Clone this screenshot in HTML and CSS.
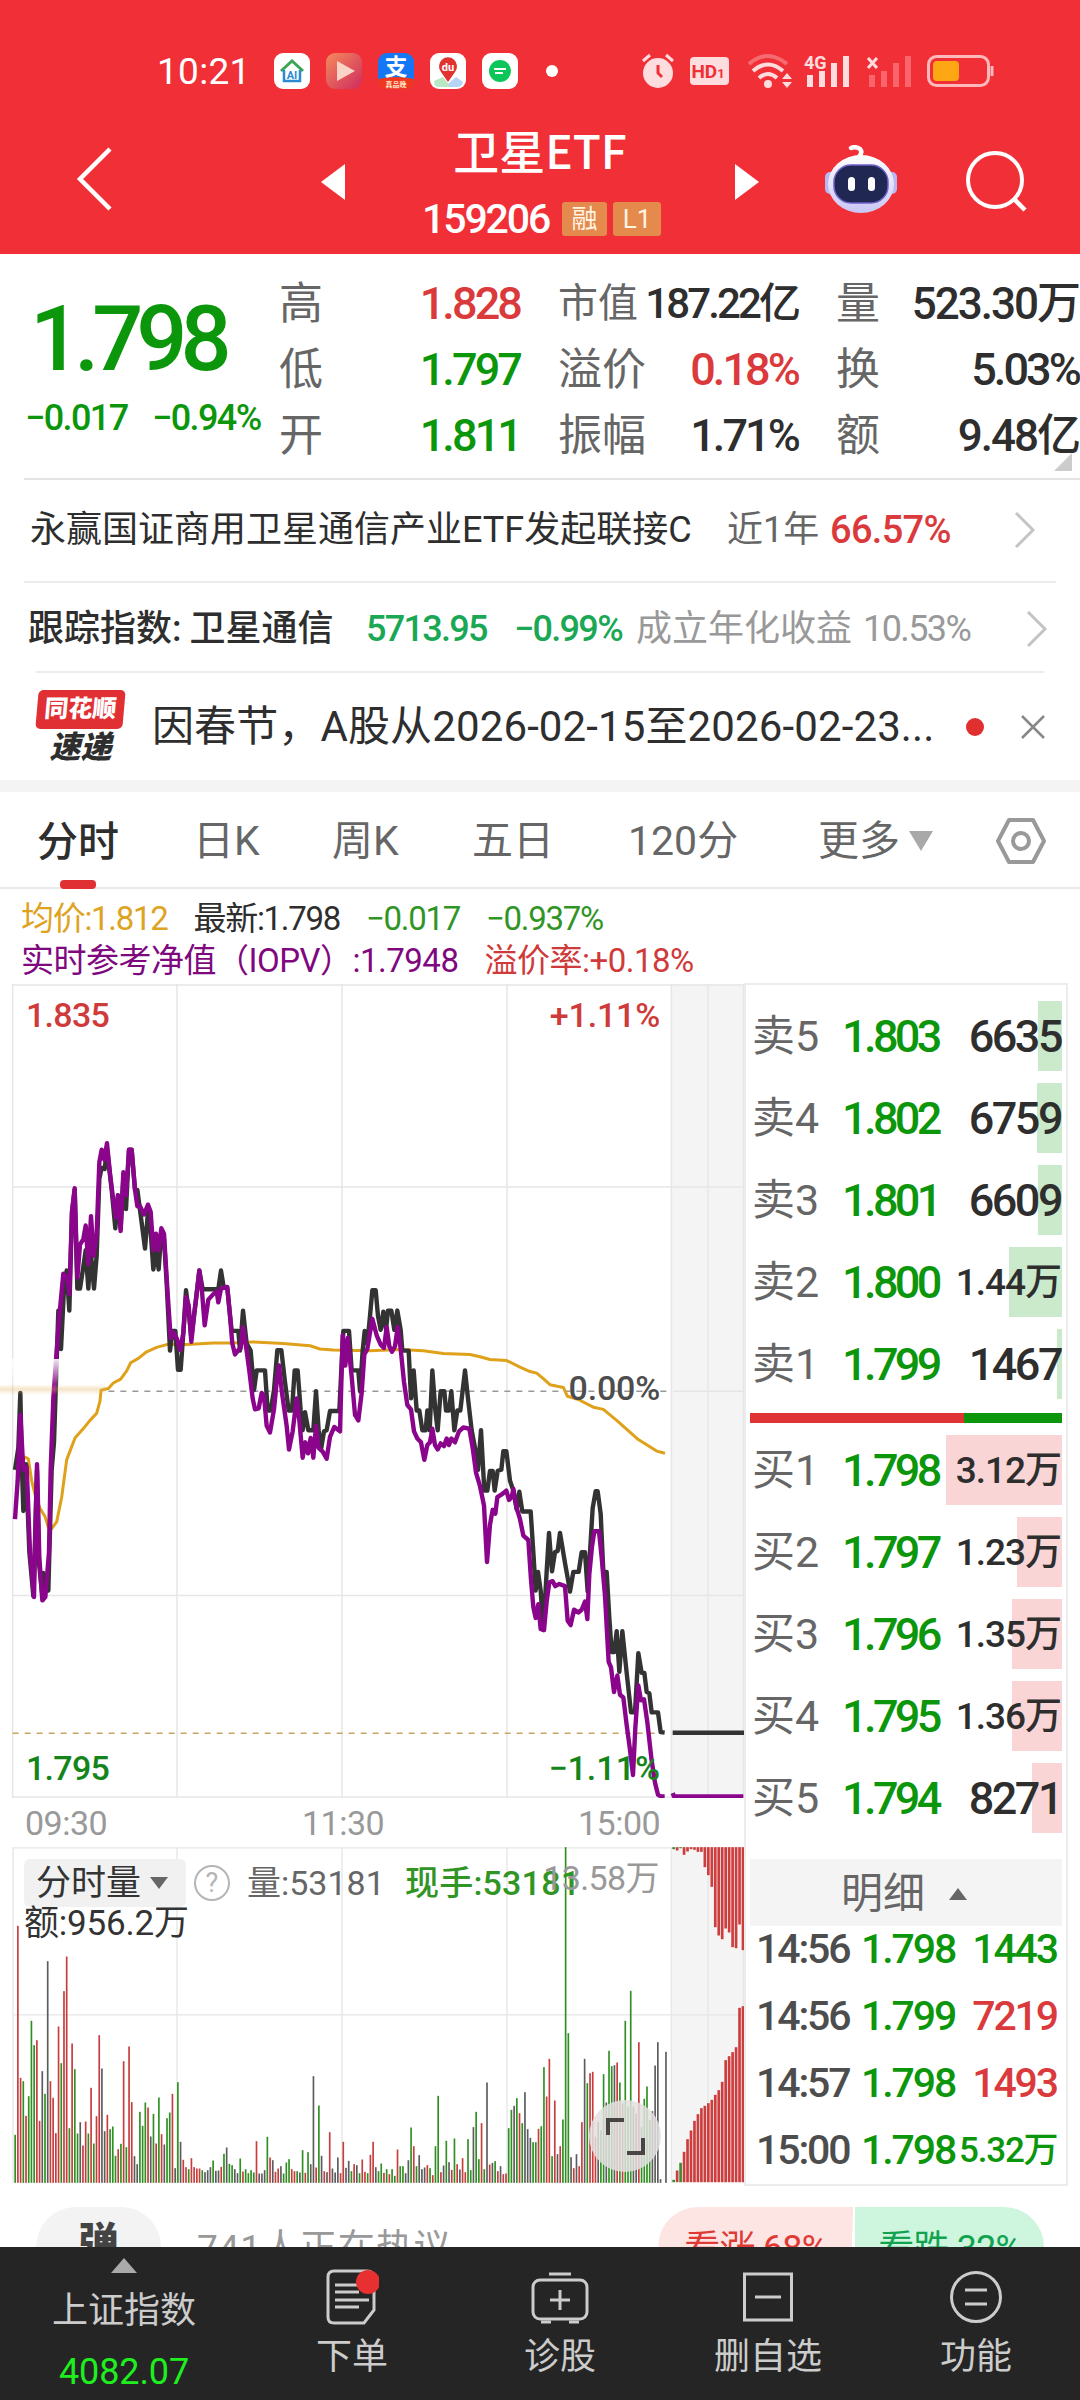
FILE: index.html
```html
<!DOCTYPE html>
<html lang="zh-CN">
<head>
    <meta charset="utf-8">
    <title>卫星ETF 159206</title>
    <meta name="viewport" content="width=1080">
    <link rel="stylesheet" href="styles.css">
</head>
<body>
    <header class="header">
        <div class="status">
            <span class="clock">10:21</span>
            <div class="apps">
                <svg width="36" height="36" viewBox="0 0 36 36"><rect width="36" height="36" rx="9" fill="#fff"/><path d="M7 18 18 8l11 10" fill="none" stroke="#3aa655" stroke-width="3"/><path d="M10 17v11h16V17" fill="none" stroke="#2b8bd0" stroke-width="2.5"/><text x="18" y="26" class="app-ai">AI</text></svg>
                <svg width="36" height="36" viewBox="0 0 36 36"><defs><linearGradient id="play" x2="1" y2="1"><stop offset="0" stop-color="#f58a5c"/><stop offset="1" stop-color="#cf2b5e"/></linearGradient></defs><rect width="36" height="36" rx="9" fill="url(#play)"/><path d="M11 8v20l18-10z" fill="#fbd3c6"/></svg>
                <svg width="36" height="36" viewBox="0 0 36 36"><rect width="36" height="36" rx="9" fill="#1677f5"/><path d="M0 26q18-4 36 0v1q0 9-9 9H9q-9 0-9-9z" fill="#f0381f"/><text x="18" y="22" class="app-zhi">支</text><text x="18" y="34" class="app-tag">真品晚</text></svg>
                <svg width="36" height="36" viewBox="0 0 36 36"><rect width="36" height="36" rx="9" fill="#fff"/><path d="M4 28l9-4 8 10H9q-5 0-5-6z" fill="#b9e7c4"/><path d="M18 31l8-7 7 5q-1 5-6 5h-7z" fill="#b5d4f7"/><path d="M18 29 11 19a9 9 0 1 1 14 0z" fill="#e2322f"/><text x="18" y="18" class="app-du">du</text></svg>
                <svg width="36" height="36" viewBox="0 0 36 36"><rect width="36" height="36" rx="9" fill="#fff"/><circle cx="18" cy="18" r="11" fill="#0cc65a"/><path d="M12 16h12M13 20h8" stroke="#fff" stroke-width="2"/></svg>
                <i class="more-dot"></i>
            </div>
            <div class="signals">
                <svg width="34" height="36" viewBox="0 0 34 36"><circle cx="17" cy="20" r="15" fill="#ffdcdd"/><path d="M2 8l7-6M32 8l-7-6" stroke="#ffdcdd" stroke-width="3"/><path d="M17 12v8l4 4" fill="none" stroke="#f12f37" stroke-width="3"/></svg>
                <svg width="39" height="28" viewBox="0 0 39 28"><rect width="39" height="28" rx="4" fill="#ffdcdd"/><text x="18" y="21" class="hd">HD<tspan font-size="13">1</tspan></text></svg>
                <svg width="46" height="36" viewBox="0 0 46 36"><g fill="none" stroke-width="4" stroke="#ffdcdd"><path d="M2 11q18-16 38 0" opacity=".35"/><path d="M6 18q15-13 30 0"/><path d="M12 25q9-8 18 0"/></g><circle cx="21" cy="31" r="4" fill="#ffdcdd"/><path d="M35 26l5-6 5 6zM35 29l5 6 5-6z" fill="#ffdcdd"/></svg>
                <svg width="47" height="36" viewBox="0 0 47 36"><text x="0" y="16" class="net">4G</text><path d="M6 34V22M18 34V18M30 34V10M42 34V3" stroke="#ffdcdd" stroke-width="6"/></svg>
                <svg width="46" height="36" viewBox="0 0 46 36"><path d="M2 5l9 10M11 5L2 15" stroke="#ffdcdd" stroke-width="3"/><path d="M6 34V22M18 34V18M30 34V10M42 34V3" stroke="#f9656b" stroke-width="6"/></svg>
                <svg width="68" height="32" viewBox="0 0 68 32"><rect x="1.5" y="1.5" width="60" height="29" rx="8" fill="none" stroke="#ffb9bb" stroke-width="3"/><rect x="6" y="6" width="26" height="20" rx="4" fill="#fda714"/><path d="M65 11v10" stroke="#ffb9bb" stroke-width="3"/></svg>
            </div>
        </div>
        <div class="titlebar">
            <svg class="back" width="38" height="66" viewBox="0 0 38 66"><path d="M34 3 4 33l30 30" fill="none" stroke="#fff" stroke-width="4.5"/></svg>
            <svg class="prev" width="24" height="36" viewBox="0 0 24 36"><path d="M24 0v36L0 18z" fill="#fff"/></svg>
            <div class="title">
                <h1>卫星ETF</h1>
                <p><span class="code">159206</span><span class="badge">融</span><span class="badge badge-l1">L1</span></p>
            </div>
            <svg class="next" width="24" height="36" viewBox="0 0 24 36"><path d="M0 0v36l24-18z" fill="#fff"/></svg>
            <svg class="robot" width="72" height="68" viewBox="0 0 72 68"><defs><linearGradient id="shell" x2="0" y2="1"><stop offset="0" stop-color="#fff"/><stop offset="1" stop-color="#c9c6f5"/></linearGradient></defs><path d="M34 12q4-5 1-8q-4-3-9-1" fill="none" stroke="#fff" stroke-width="4.500" stroke-linecap="round"/><rect x="0" y="27" width="10" height="22" rx="5" fill="#b9b8f2"/><rect x="62" y="27" width="10" height="22" rx="5" fill="#b9b8f2"/><ellipse cx="36" cy="39" rx="33" ry="29" fill="url(#shell)"/><rect x="9" y="20" width="54" height="38" rx="17" fill="#1f2752" stroke="#6d60c9" stroke-width="1.500"/><rect x="23" y="32" width="7" height="14" rx="3.500" fill="#fff"/><rect x="43" y="32" width="7" height="14" rx="3.500" fill="#fff"/></svg>
            <svg class="search" width="62" height="62" viewBox="0 0 62 62"><circle cx="29" cy="30" r="27" fill="none" stroke="#fff" stroke-width="4"/><path d="M48 49l11 11" stroke="#fff" stroke-width="4.5"/></svg>
        </div>
    </header>

    <section class="summary">
        <div class="now down">
            <strong>1.798</strong>
            <p><span>−0.017</span><span>−0.94%</span></p>
        </div>
        <dl class="facts">
            <dt>高</dt><dd class="up">1.828</dd><dt class="tight">市值</dt><dd class="small">187.22亿</dd><dt>量</dt><dd class="wide">523.30万</dd>
            <dt>低</dt><dd class="down">1.797</dd><dt>溢价</dt><dd class="up">0.18%</dd><dt>换</dt><dd>5.03%</dd>
            <dt>开</dt><dd class="down">1.811</dd><dt>振幅</dt><dd>1.71%</dd><dt>额</dt><dd class="wide">9.48亿</dd>
        </dl>
        <svg class="corner" width="18" height="18" viewBox="0 0 18 18"><path d="M18 0v18H0z" fill="#ccc"/></svg>
    </section>

    <section class="row fund">
        <span>永赢国证商用卫星通信产业ETF发起联接C</span>
        <span class="muted">近1年</span>
        <b class="up">66.57%</b>
        <svg width="22" height="36" viewBox="0 0 22 36"><path d="M2 1l17 17L2 35" fill="none" stroke="#c4c4c4" stroke-width="3"/></svg>
    </section>
    <section class="row index">
        <span class="name">跟踪指数: 卫星通信</span>
        <b>5713.95</b>
        <b>−0.99%</b>
        <span class="light">成立年化收益</span>
        <span class="light rate">10.53%</span>
        <svg width="22" height="36" viewBox="0 0 22 36"><path d="M2 1l17 17L2 35" fill="none" stroke="#c4c4c4" stroke-width="3"/></svg>
    </section>
    <section class="row news">
        <div class="logo"><span>同花顺</span><em>速递</em></div>
        <span class="headline">因春节，A股从2026-02-15至2026-02-23...</span>
        <i class="unread"></i>
        <svg width="26" height="26" viewBox="0 0 26 26"><path d="M2 2l22 22M24 2 2 24" stroke="#888" stroke-width="2.5"/></svg>
    </section>

    <nav class="tabs">
        <span class="active">分时</span>
        <span>日K</span>
        <span>周K</span>
        <span>五日</span>
        <span>120分</span>
        <span>更多</span>
        <svg width="24" height="20" viewBox="0 0 24 20"><path d="M0 0h24L12 20z" fill="#a9a9a9"/></svg>
        <svg class="gear" width="50" height="48" viewBox="0 0 50 48"><path d="M13 3h24l11 21-11 21H13L2 24z" fill="none" stroke="#999" stroke-width="4" stroke-linejoin="round"/><circle cx="25" cy="24" r="8" fill="none" stroke="#999" stroke-width="4"/></svg>
    </nav>

    <section class="legend">
        <p><span class="avg">均价:1.812</span><span class="last">最新:1.798</span><span class="green">−0.017</span><span class="green">−0.937%</span></p>
        <p><span class="iopv">实时参考净值（IOPV）:1.7948</span><span class="premium">溢价率:+0.18%</span></p>
    </section>

    <main class="quote">
        <div class="charts">
            <div class="price-chart">
                <svg width="744" height="814" viewBox="0 45 2232 1483" preserveAspectRatio="none">
                    <rect x="2013" y="45" width="219" height="1483" fill="#f4f4f4"/>
                    <g class="grid">
                        <path d="M38 45V1528M531 45V1528M1026 45V1528M1521 45V1528M2014 45V1528M2124 45V1528M2230 45V1528"/>
                        <path d="M38 47H2232M38 415H2232M2020 787H2232M38 1159H2232M38 1526H2232"/>
                    </g>
                    <path class="zero" d="M325 787H2000"/>
                    <path class="limit" d="M38 1410H1990"/>
                    <polyline class="line average" points="45,930 75,907 85,910 95,950 105,975 120,1000 135,1015 145,1035 155,1037 170,1025 185,980 200,912 225,872 250,855 270,840 290,827 300,805 303,785 325,782 340,772 362,765 380,750 392,735 415,727 440,715 470,707 500,702 560,702 640,699 700,699 760,697 850,700 930,704 960,710 1000,712 1110,713 1200,711 1270,713 1330,718 1410,720 1440,724 1470,729 1520,731 1560,743 1590,751 1610,754 1630,764 1650,775 1690,780 1702,796 1735,802 1780,816 1810,820 1850,840 1915,875 1970,896 1995,900"/>
                    <polyline class="line last-price" points="45,930 55,890 61,790 66,930 70,1005 78,920 88,1080 100,1160 104,1080 111,930 117,1100 127,1160 130,1118 145,1150 155,930 162,880 175,640 183,710 192,600 200,567 208,640 216,460 224,420 232,600 240,600 250,560 257,530 265,600 272,530 282,600 290,540 298,400 305,380 314,382 321,345 335,420 346,490 354,430 362,490 370,400 378,455 387,347 395,347 405,420 412,420 425,480 435,527 444,460 452,495 460,565 468,530 476,565 484,495 492,510 500,590 510,713 517,677 526,677 534,748 542,748 550,680 558,603 566,640 574,690 590,610 598,567 608,601 655,601 663,567 671,597 682,600 695,677 715,677 720,713 729,640 740,700 752,713 762,785 770,749 795,749 803,822 812,822 822,785 832,712 844,712 855,770 866,822 876,822 884,749 893,749 902,822 908,858 915,825 925,858 940,858 948,787 956,858 963,893 972,860 980,858 990,823 1018,823 1023,760 1030,677 1047,677 1055,749 1075,749 1080,787 1088,713 1094,677 1102,700 1110,650 1117,603 1127,603 1134,650 1142,675 1150,642 1158,675 1164,640 1174,640 1183,675 1192,640 1202,675 1207,713 1226,713 1233,800 1241,749 1250,822 1258,822 1267,858 1277,858 1282,822 1289,858 1297,749 1306,822 1313,858 1322,787 1333,787 1338,822 1347,822 1354,787 1363,858 1372,822 1381,822 1395,749 1404,800 1415,858 1425,890 1434,930 1443,858 1453,968 1462,968 1470,932 1478,932 1484,968 1493,932 1504,930 1510,896 1519,896 1530,950 1540,968 1550,1002 1558,970 1567,1006 1592,1006 1600,1080 1607,1150 1614,1116 1622,1150 1630,1222 1640,1115 1647,1045 1656,1115 1665,1080 1673,1078 1680,1045 1695,1100 1704,1130 1710,1152 1720,1116 1736,1116 1745,1080 1755,1080 1763,1152 1772,1060 1778,1000 1787,969 1793,969 1802,1010 1810,1116 1820,1116 1828,1200 1835,1262 1843,1262 1850,1224 1858,1298 1867,1224 1880,1300 1893,1372 1905,1372 1915,1264 1925,1300 1933,1300 1940,1335 1948,1337 1955,1372 1974,1372 1982,1408 1994,1409"/>
                    <path class="line last-price" d="M2018 1409H2232"/>
                    <polyline class="line iopv-line" points="45,1020 53,950 61,830 70,930 80,925 90,1080 102,1162 106,1050 111,920 118,1090 127,1168 136,1162 147,1080 152,930 160,800 168,730 178,650 190,573 203,580 208,610 216,460 224,417 232,580 240,520 250,510 257,485 265,555 273,468 281,540 290,500 298,370 305,347 313,365 321,335 330,390 340,440 348,470 354,430 362,495 370,388 378,430 387,347 395,347 405,420 412,450 420,450 432,465 444,447 452,460 460,530 468,500 476,530 484,490 492,500 502,600 512,690 520,680 530,690 541,712 550,680 558,615 566,630 574,697 582,650 598,567 606,605 614,667 625,620 640,610 650,605 655,625 663,600 682,597 690,650 697,700 705,720 715,712 722,708 729,670 738,705 748,750 758,800 765,820 776,818 785,790 792,795 800,850 810,862 822,820 830,770 837,740 846,790 860,850 867,893 878,860 890,800 898,840 908,908 916,880 924,900 932,872 940,908 948,850 956,890 968,897 980,910 990,870 1003,852 1020,860 1028,685 1036,740 1043,690 1055,760 1065,830 1075,840 1085,790 1093,720 1102,710 1110,680 1117,655 1130,685 1142,702 1152,708 1160,670 1168,705 1176,715 1185,705 1193,670 1202,710 1212,770 1222,812 1233,820 1242,860 1252,873 1263,880 1273,912 1282,885 1290,880 1297,855 1305,885 1313,893 1322,882 1332,887 1340,873 1347,885 1354,873 1365,880 1377,860 1390,853 1408,855 1418,890 1428,935 1440,960 1452,995 1461,1098 1470,1030 1478,1003 1486,1010 1492,980 1505,975 1519,968 1527,985 1535,980 1540,965 1550,1000 1560,1020 1570,1050 1585,1058 1593,1130 1600,1180 1607,1200 1615,1175 1622,1220 1632,1222 1640,1170 1648,1135 1658,1133 1666,1142 1678,1138 1695,1142 1703,1205 1712,1213 1722,1185 1735,1190 1745,1185 1755,1170 1762,1202 1768,1120 1776,1070 1783,1042 1797,1042 1805,1090 1815,1160 1826,1280 1833,1290 1842,1335 1852,1305 1860,1340 1870,1345 1880,1395 1890,1440 1899,1486 1906,1400 1915,1323 1923,1350 1932,1348 1942,1390 1955,1460 1965,1500 1974,1522 1982,1525 1994,1525"/>
                    <path class="line iopv-line" d="M2018 1519L2022 1525H2230"/>
                </svg>
                <i class="flare"></i>
                <span class="label top-left">1.835</span>
                <span class="label top-right">+1.11%</span>
                <span class="label middle">0.00%</span>
                <span class="label bottom-left">1.795</span>
                <span class="label bottom-right">−1.11%</span>
            </div>
            <div class="times"><span>09:30</span><span>11:30</span><span>15:00</span></div>
            <div class="volume-chart">
                <svg width="744" height="336" viewBox="0 81 2232 1007">
                    <rect x="2013" y="81" width="219" height="1007" fill="#f4f4f4"/>
                    <path class="grid" d="M38 83H2232M38 584H2232M39 81V1088M531 81V1088M1026 81V1088M1521 81V1088M2014 81V1088M2124 81V1088M2230 81V1088"/>
                    <g id="volume"></g>
                    <g id="auction"></g>
                </svg>
                <div class="volume-legend">
                    <span class="chip">分时量<svg width="18" height="12" viewBox="0 0 18 12"><path d="M0 0h18L9 12z" fill="#666"/></svg></span>
                    <span class="help">?</span>
                    <span class="vol">量:53181</span>
                    <span class="hand">现手:53181</span>
                </div>
                <span class="max-volume">13.58万</span>
                <span class="amount">额:956.2万</span>
                <svg class="expand" width="72" height="72" viewBox="0 0 72 72"><circle cx="36" cy="36" r="36" fill="#e2e0df" opacity=".85"/><path d="M19 35V20h16M54 38v15H38" fill="none" stroke="#4a4545" stroke-width="4"/></svg>
            </div>
        </div>
        <aside class="book">
            <div class="orders" id="asks"></div>
            <div class="ratio"></div>
            <div class="orders" id="bids"></div>
            <div class="detail-head">明细<svg width="18" height="12" viewBox="0 0 18 12"><path d="M0 12h18L9 0z" fill="#666"/></svg></div>
            <div class="trades">
                <span>14:56</span><b>1.798</b><b class="down">1443</b>
                <span>14:56</span><b>1.799</b><b class="up">7219</b>
                <span>14:57</span><b>1.798</b><b class="up">1493</b>
                <span>15:00</span><b>1.798</b><b class="down compact">5.32万</b>
            </div>
        </aside>
    </main>

    <section class="chat">
        <b class="danmu">弹</b>
        <span class="talking">741人正在热议</span>
        <span class="vote bull">看涨 68%</span>
        <span class="vote bear">看跌 32%</span>
    </section>

    <footer class="bottom">
        <div class="market">
            <svg width="26" height="15" viewBox="0 0 26 15"><path d="M0 15h26L13 0z" fill="#aaa"/></svg>
            <span>上证指数</span>
            <span class="points">4082.07</span>
        </div>
        <div class="action">
            <svg width="54" height="58" viewBox="0 0 54 58"><path d="M9 3h33q7 0 7 7v32L39 55H9q-6 0-6-6V9q0-6 6-6z" fill="none" stroke="#ccc" stroke-width="3"/><path d="M10 17h24M10 24h24M10 32h34M10 39h24" stroke="#ccc" stroke-width="3"/><circle cx="43" cy="14" r="12" fill="#e93030"/></svg>
            <span>下单</span>
        </div>
        <div class="action">
            <svg width="58" height="58" viewBox="0 0 58 58"><path d="M18 6h22" stroke="#ccc" stroke-width="3"/><rect x="2" y="12" width="54" height="39" rx="7" fill="none" stroke="#ccc" stroke-width="3"/><path d="M10 54h10M38 54h10M19 32h20M29 22v20" stroke="#ccc" stroke-width="3"/></svg>
            <span>诊股</span>
        </div>
        <div class="action">
            <svg width="50" height="58" viewBox="0 0 50 58"><rect x="1.500" y="6" width="47" height="46" fill="none" stroke="#ccc" stroke-width="3"/><path d="M12 29h26" stroke="#ccc" stroke-width="3"/></svg>
            <span>删自选</span>
        </div>
        <div class="action">
            <svg width="52" height="58" viewBox="0 0 52 58"><circle cx="26" cy="29" r="24.500" fill="none" stroke="#ccc" stroke-width="3"/><path d="M15 22h22M15 36h22" stroke="#ccc" stroke-width="3"/></svg>
            <span>功能</span>
        </div>
    </footer>

    <script src="chart.js"></script>
</body>
</html>
```

FILE: styles.css
```css
* {
    box-sizing: border-box;
}

body {
    width: 1080px;
    height: 2400px;
    margin: 0;
    overflow: hidden;
    background: #fff;
    color: #2e2e2e;
    font-family: Roboto, "Noto Sans CJK SC", sans-serif;
    line-height: 1;
    white-space: nowrap;
}

h1, p, dl, dd {
    margin: 0;
}

b, strong {
    font-weight: 500;
}

svg {
    display: block;
    flex: none;
}

.up {
    color: #db3a3c;
}

.down {
    color: #0b960b;
}

/* header */
.header {
    height: 254px;
    background: #f12f37;
    color: #fff;
}

.status {
    display: flex;
    align-items: center;
    height: 142px;
    padding-left: 157px;
}

.clock {
    width: 117px;
    font-size: 37px;
    letter-spacing: .3px;
}

.apps {
    display: flex;
    align-items: center;
    gap: 16px;
    width: 367px;
}

.more-dot {
    width: 12px;
    height: 12px;
    margin-left: 12px;
    border-radius: 50%;
    background: #fff;
}

.signals {
    display: flex;
    align-items: center;
    gap: 15px;
}

.signals svg:nth-child(3) {
    margin-left: 3px;
}

.signals svg:nth-child(4) {
    margin-left: -4px;
}

.app-ai, .app-zhi, .app-tag, .app-du, .hd {
    text-anchor: middle;
    font-weight: 700;
}

.app-ai {
    fill: #2b8bd0;
    font-size: 11px;
}

.app-zhi {
    fill: #fff;
    font-size: 23px;
}

.app-tag {
    fill: #ffe3c8;
    font-size: 7px;
}

.app-du {
    fill: #fff;
    font-size: 11px;
}

.hd {
    fill: #f12f37;
    font-size: 19px;
}

.net {
    fill: #ffdcdd;
    font-size: 18px;
    font-weight: 700;
}

.titlebar {
    display: flex;
    align-items: flex-start;
    height: 112px;
}

.back {
    margin: 4px 0 0 76px;
}

.prev {
    margin: 22px 0 0 207px;
}

.title {
    width: 390px;
    text-align: center;
}

.title h1 {
    height: 54px;
    margin-top: -20px;
    font-size: 46px;
    font-weight: 500;
    line-height: 54px;
    font-family: "Noto Sans CJK SC", sans-serif;
}

.title p {
    display: flex;
    align-items: center;
    margin-top: 25px;
    padding-left: 77px;
    height: 36px;
}

.code {
    width: 140px;
    font-size: 41px;
    font-weight: 500;
    letter-spacing: -2.1px;
    text-align: left;
}

.badge {
    width: 45px;
    height: 34px;
    margin-right: 6px;
    border-radius: 3px;
    background: #e48a4c;
    color: #fff3e2;
    font-size: 26px;
    line-height: 34px;
}

.badge-l1 {
    width: 48px;
}

.next {
    margin-top: 22px;
}

.robot {
    margin: 3px 0 0 66px;
}

.search {
    margin: 8px 0 0 69px;
}

/* summary */
.summary {
    position: relative;
    display: flex;
    height: 226px;
}

.summary::after, .fund::after, .index::after {
    content: "";
    position: absolute;
    right: 0;
    bottom: 0;
    left: 24px;
    height: 2px;
    background: #e4e4e4;
}

.now {
    width: 279px;
    padding: 41px 0 0 30px;
}

.now strong {
    display: block;
    height: 90px;
    font-size: 90px;
    letter-spacing: -7px;
}

.now p {
    display: flex;
    margin: 15px 0 0 -5px;
    font-size: 36px;
    font-weight: 500;
    letter-spacing: -1.6px;
    line-height: 36px;
}

.now p span {
    width: 129px;
}

.facts {
    display: grid;
    grid-template-columns: 90px 151px 38px 90px 150px 38px 42px 201px;
    grid-template-rows: repeat(3, 66px);
    align-items: center;
    margin-top: 17px;
    font-size: 44px;
    line-height: 66px;
}

.facts dt {
    color: #666;
}

.facts dt:nth-of-type(3n + 2) {
    grid-column: 4;
}

.facts dt:nth-of-type(3n) {
    grid-column: 7;
}

.facts .tight {
    font-size: 40px;
}

.facts dd {
    font-size: 45px;
    font-weight: 500;
    letter-spacing: -2.9px;
    text-align: right;
}

.facts dd.small {
    margin-left: -20px;
    font-size: 42px;
}

.facts dd.wide {
    font-size: 44px;
    letter-spacing: -2px;
}

.corner {
    position: absolute;
    right: 8px;
    bottom: 9px;
}

/* info rows */
.row {
    position: relative;
    display: grid;
    align-items: center;
    font-size: 36px;
}

.fund {
    grid-template-columns: 697px 103px 184px 22px;
    height: 103px;
    padding: 0 0 4px 30px;
}

.fund::after {
    right: 24px;
    background: #ececec;
}

.fund b {
    font-size: 38px;
    letter-spacing: -.7px;
}

.muted {
    color: #666;
}

.index {
    grid-template-columns: 338px 148px 122px 227px 163px 22px;
    height: 90px;
    padding: 1px 0 0 28px;
}

.index::after {
    right: 36px;
    left: 36px;
    background: #ececec;
}

.name {
    font-weight: 500;
    word-spacing: -1px;
}

.index b {
    color: #1aa855;
    letter-spacing: -1.7px;
}

.light {
    color: #999;
}

.rate {
    letter-spacing: -1.6px;
}

.news {
    grid-template-columns: 115px 814px 54px 26px;
    height: 107px;
    padding-left: 37px;
}

.logo {
    width: 87px;
}

.logo span {
    display: block;
    height: 39px;
    border-radius: 5px;
    background: #e03034;
    color: #fff;
    font-size: 24px;
    font-weight: 900;
    line-height: 38px;
    text-align: center;
    transform: skewX(-5deg);
}

.logo em {
    display: block;
    height: 34px;
    font-size: 31px;
    font-weight: 900;
    line-height: 37px;
    text-align: center;
}

.headline {
    font-size: 42px;
    letter-spacing: .12px;
}

.unread {
    width: 18px;
    height: 18px;
    border-radius: 50%;
    background: #e02f2f;
}

/* period tabs */
.tabs {
    display: grid;
    grid-template-columns: 156px 139px 140px 156px 190px 91px 87px 50px;
    align-items: center;
    height: 109px;
    padding: 0 0 0 37px;
    border-top: 12px solid #f4f4f4;
    border-bottom: 2px solid #e9e9e9;
    color: #666;
    font-size: 41px;
    line-height: 98px;
}

.active {
    position: relative;
    height: 96px;
    color: #2e2e2e;
    font-weight: 500;
}

.active::after {
    content: "";
    position: absolute;
    bottom: 0;
    left: 23px;
    width: 36px;
    height: 9px;
    border-radius: 4px;
    background: #e03034;
}

/* chart legend */
.legend {
    height: 94px;
    padding: 9px 0 0 21px;
    font-size: 33px;
    line-height: 42px;
    letter-spacing: -1.3px;
}

.legend p {
    display: flex;
    gap: 26px;
}

.legend p + p {
    letter-spacing: -.5px;
}

.avg {
    color: #dea31f;
}

.green {
    color: #319525;
}

.iopv {
    color: #80087f;
}

.premium {
    color: #cf3a3a;
}

/* charts and order book */
.quote {
    display: grid;
    grid-template-columns: 744px 324px;
    height: 1200px;
}

.price-chart {
    position: relative;
    height: 817px;
    padding-top: 1px;
}

.grid {
    fill: none;
    stroke: #e6e6e6;
    stroke-width: 4;
}

.price-chart .grid path {
    stroke-width: 1.5;
    vector-effect: non-scaling-stroke;
}

.zero, .limit {
    stroke: #999;
    stroke-dasharray: 6 6;
    stroke-width: 1.5;
    vector-effect: non-scaling-stroke;
}

.limit {
    stroke: #c9a565;
}

.line {
    fill: none;
    stroke-width: 4.4;
    stroke-linejoin: round;
    vector-effect: non-scaling-stroke;
}

.average {
    stroke: #dfa01a;
    stroke-width: 3;
}

.last-price {
    stroke: #333;
}

.iopv-line {
    stroke: #8a058c;
}

.flare {
    position: absolute;
    top: 376px;
    left: 0;
    width: 106px;
    height: 36px;
    background: linear-gradient(rgba(255, 255, 255, .9), rgba(255, 255, 255, .1) 70%, rgba(226, 180, 100, .35) 84%, rgba(255, 255, 255, 0));
}

.label {
    position: absolute;
    font-size: 34px;
    font-weight: 500;
    letter-spacing: -.7px;
}

.top-left {
    top: 15px;
    left: 26px;
    color: #cf3a3a;
}

.top-right {
    top: 15px;
    right: 84px;
    color: #cf3a3a;
    letter-spacing: -.2px;
}

.middle {
    top: 388px;
    right: 84px;
    color: #4d4d4d;
    letter-spacing: -.2px;
}

.bottom-left {
    top: 768px;
    left: 26px;
    color: #14851a;
}

.bottom-right {
    top: 768px;
    right: 84px;
    color: #14851a;
    letter-spacing: 0;
}

.times {
    display: grid;
    grid-template-columns: 277px 276px auto;
    align-items: center;
    height: 47px;
    padding: 0 0 2px 25px;
    color: #999;
    font-size: 34px;
    letter-spacing: -.5px;
}

.volume-chart {
    position: relative;
    height: 336px;
    color: #333;
    font-size: 34px;
}

.volume-legend {
    position: absolute;
    top: 12px;
    left: 24px;
    display: flex;
    align-items: center;
    height: 48px;
}

.chip {
    display: flex;
    align-items: center;
    gap: 9px;
    width: 162px;
    height: 48px;
    padding-left: 12px;
    border-radius: 6px;
    background: #f1f1f1;
    font-size: 35px;
}

.help {
    width: 36px;
    height: 36px;
    margin-left: 8px;
    border: 2px solid #b5b5b5;
    border-radius: 50%;
    color: #b5b5b5;
    font-size: 27px;
    line-height: 33px;
    text-align: center;
}

.vol {
    width: 158px;
    margin-left: 17px;
    color: #666;
}

.hand {
    color: #319525;
    font-weight: 500;
    letter-spacing: .2px;
}

.max-volume {
    position: absolute;
    top: 14px;
    right: 85px;
    color: #999;
    letter-spacing: -.6px;
}

.amount {
    position: absolute;
    top: 59px;
    left: 24px;
    font-size: 35px;
    letter-spacing: -.2px;
}

.expand {
    position: absolute;
    top: 253px;
    left: 589px;
}

.book {
    border: 2px solid #ececec;
    padding: 16px 4px 0;
}

.orders {
    display: grid;
    gap: 12px;
}

.order {
    display: grid;
    grid-template-columns: 92px 98px 121px;
    align-items: center;
    height: 70px;
    background-repeat: no-repeat;
    background-position: right;
    font-size: 45px;
    font-weight: 500;
}

#asks .order {
    background-image: linear-gradient(#cbe9cb, #cbe9cb);
}

#bids .order {
    background-image: linear-gradient(#f9d5d6, #f9d5d6);
}

.order span:first-child {
    padding-left: 2px;
    color: #666;
    font-size: 43px;
    font-weight: 400;
}

.order .cost {
    color: #0b960b;
    letter-spacing: -3.6px;
}

.order .amount-left {
    letter-spacing: -2.5px;
    text-align: right;
}

.order .compact {
    font-size: 37px;
    letter-spacing: -1px;
}

.ratio {
    height: 10px;
    margin: 14px 0 12px;
    background: linear-gradient(90deg, #e03333 214px, #0b960b 214px);
}

.detail-head {
    display: flex;
    align-items: center;
    justify-content: center;
    gap: 24px;
    height: 67px;
    margin-top: 26px;
    padding: 3px 4px 0 0;
    background: #f4f4f4;
    color: #666;
    font-size: 42px;
}

.trades {
    display: grid;
    grid-template-columns: 105px 98px 98px;
    grid-auto-rows: 67px;
    align-items: center;
    margin-top: -10px;
    padding-left: 6px;
    font-size: 41px;
    letter-spacing: -2.1px;
}

.trades span {
    color: #4d4d4d;
    font-weight: 500;
}

.trades b:nth-child(3n + 2) {
    color: #0b960b;
}

.trades b:nth-child(3n) {
    text-align: right;
}

.trades .compact {
    font-size: 35px;
    letter-spacing: -1.2px;
}

/* discussion strip, cut off by the bottom bar */
.chat {
    display: flex;
    height: 64px;
    padding: 24px 36px 0;
    overflow: hidden;
    font-size: 37px;
}

.danmu {
    width: 125px;
    height: 80px;
    border-radius: 40px;
    background: #f3f3f3;
    color: #444;
    font-size: 40px;
    font-weight: 900;
    line-height: 72px;
    text-align: center;
}

.talking {
    width: 462px;
    margin-left: 36px;
    color: #999;
    line-height: 84px;
    letter-spacing: .9px;
}

.vote {
    width: 195px;
    height: 80px;
    font-size: 36px;
    line-height: 84px;
    letter-spacing: -.8px;
    text-align: center;
}

.bull {
    border-radius: 40px 0 0 40px;
    background: #fde5e4;
    color: #e03a35;
    clip-path: polygon(0 0, 100% 0, 98.5% 100%, 0 100%);
}

.bear {
    width: 189px;
    margin-left: 2px;
    border-radius: 0 40px 40px 0;
    background: #cef5de;
    color: #12a350;
}

/* bottom bar */
.bottom {
    display: grid;
    grid-template-columns: 248px repeat(4, 208px);
    height: 153px;
    background: #252525;
    color: #ccc;
    font-size: 36px;
}

.market {
    display: flex;
    flex-direction: column;
    align-items: center;
    padding-top: 11px;
}

.market span {
    margin-top: 20px;
}

.market .points {
    margin-top: 25px;
    color: #1fee1f;
    letter-spacing: -.1px;
}

.action {
    display: flex;
    flex-direction: column;
    align-items: center;
    gap: 13px;
    padding-top: 21px;
}
```

FILE: chart.js
```js
var SVG = "http://www.w3.org/2000/svg";
var colors = { g: "#2f8f22", r: "#c73c3c", k: "#5c5c5c" };

// top of each one-minute bar, followed by its colour
var minutes = "944g 317r 773r 783g 887r 828g 602g 675g 660r 902r 753k 821g 423k 783r 833r 939r 619r 729g 513r 409r " +
    "924g 670r 747g 940g 906k 976r 904r 940g 803r 970g 888r 645r 745k 933k 884r 927g 919g 1007g 987r 971g " +
    "723r 981g 679r 846r 1008k 1032k 875g 917g 847g 862r 949k 881g 970r 832g 942r 973k 894g 877g 821r 1044k " +
    "786g 965k 1019r 1041r 1047g 1014r 1041r 1045r 1045r 1050g 1056k 1050k 1041k 1021g 1052k 1051k 1040r 1001g 982k 1031g " +
    "1035g 1047k 1059k 1015g 1054r 1047g 1059g 1050g 1057g 963r 1060k 1060k 1050k 950g 1012r 1020k 1055r 1045r 1038k 1060g " +
    "1027g 1017g 1047r 1053r 1053g 1057k 990g 1058r 996g 1032k 768k 1042r 856g 1007k 1053r 1056k 936r 1045k 1057k 1012k " +
    "1059r 965r 1043k 1022k 1053g 1032r 1035k 1059g 1018r 1055r 1059g 1004r 965r 1041k 1053g 1030g 1058r 1047g 1062r 1047g " +
    "1067g 988r 1038g 1038g 1059k 1020k 922g 978r 1038g 1005k 1047k 1042k 1035r 1044g 1065r 978g 827g 1056r 1036k 962g " +
    "1026k 1049r 955g 1032r 1048k 1014r 1056r 957g 1050g 921k 875g 1017g 909r 1047g 787k 1033r 1028k 1023g 1053r 1038k " +
    "1062r 1060r 924g 869g 857k 834g 879r 909g 816k 927k 953k 966g 966g 926r 918g 741g 829r 716r 1008g 841r " +
    "1002k 978r 898g 81g 639g 1011k 1044r 1002k 1038r 906r 716k 789g 759r 755r 950r 905k 930g 762g 847k 692g " +
    "738g 735k 727r 787g 850r 602g 860g 512g 860k 880k 666r 920g 836g 799g 900g 873k 736k 666k 1077k 1088k 695k";

var auctionUp = [1079, 1051, 1028, 995, 957, 931, 902, 882, 864, 857, 849, 839, 824, 810, 785, 720, 708, 696, 681, 563, 558];
var auctionDown = [87, 91, 84, 104, 94, 87, 89, 95, 95, 141, 165, 200, 321, 346, 357, 325, 337, 381, 384, 313, 390];

function addBar(group, x, y, width, height, color) {
    var rect = document.createElementNS(SVG, "rect");
    rect.setAttribute("x", x);
    rect.setAttribute("y", y);
    rect.setAttribute("width", width);
    rect.setAttribute("height", height);
    rect.setAttribute("fill", color);
    group.appendChild(rect);
}

var volume = document.getElementById("volume");
minutes.split(" ").forEach(function(item, i) {
    var top = parseInt(item);
    addBar(volume, 43 + i * 8.135, top, 5, 1088 - top, colors[item.slice(-1)]);
});

var auction = document.getElementById("auction");
auctionUp.forEach(function(top, i) {
    var color = i == 0 || i == 2 ? "#3f8a33" : "#cd3d3d";
    addBar(auction, 2017 + i * 10.4, top, 8, 1086 - top, color);
    addBar(auction, 2017 + i * 10.4, 81, 8, auctionDown[i] - 81, color);
});

// name, price, quantity, depth bar width
var asks = [["卖5", "1.803", "6635", 24], ["卖4", "1.802", "6759", 25], ["卖3", "1.801", "6609", 24], ["卖2", "1.800", "1.44万", 53], ["卖1", "1.799", "1467", 5]];
var bids = [["买1", "1.798", "3.12万", 116], ["买2", "1.797", "1.23万", 45], ["买3", "1.796", "1.35万", 50], ["买4", "1.795", "1.36万", 50], ["买5", "1.794", "8271", 30]];

function fillOrders(id, orders) {
    document.getElementById(id).innerHTML = orders.map(function(o) {
        var compact = o[2].indexOf("万") > 0 ? " compact" : "";
        return '<div class="order" style="background-size: ' + o[3] + 'px 100%"><span>' + o[0] + '</span><span class="cost">' + o[1] +
            '</span><span class="amount-left' + compact + '">' + o[2] + '</span></div>';
    }).join("");
}

fillOrders("asks", asks);
fillOrders("bids", bids);
```
